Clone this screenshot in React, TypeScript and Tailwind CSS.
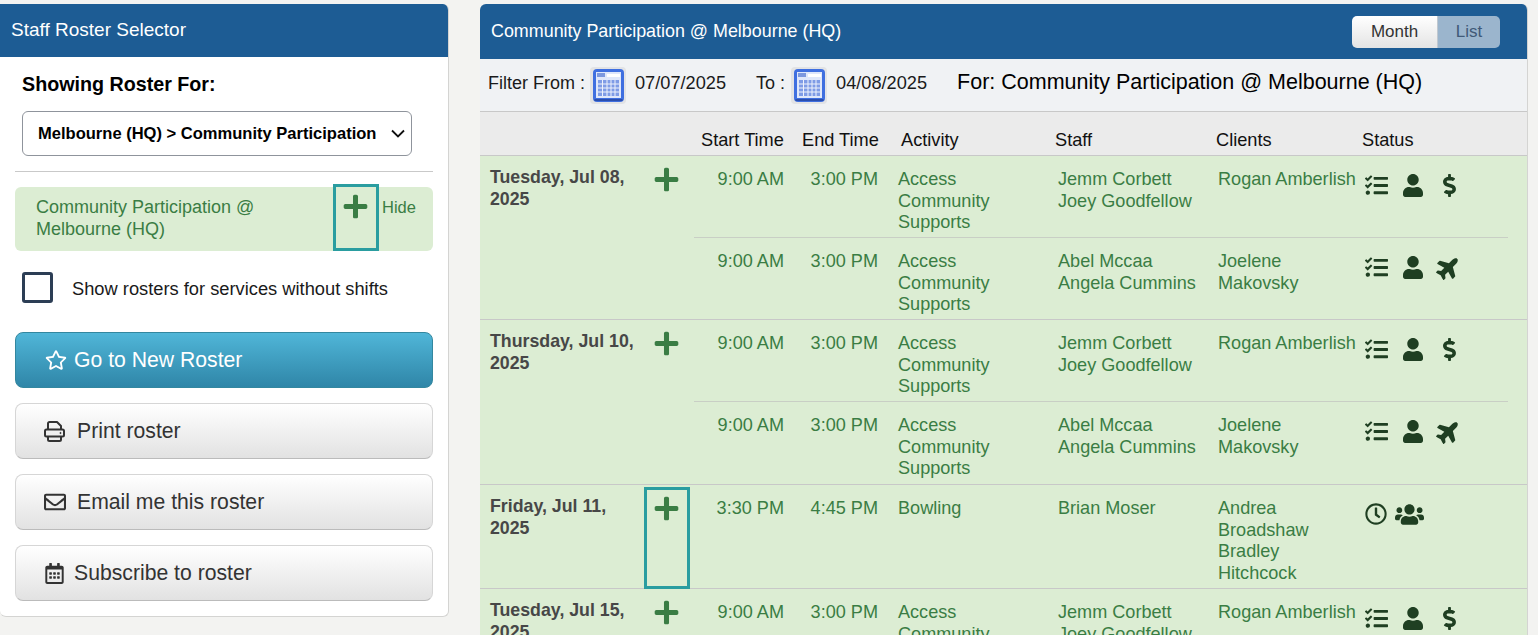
import { FaPlus, FaTasks, FaUser, FaDollarSign, FaPlane, FaUsers, FaRegClock, FaRegStar, FaRegEnvelope, FaRegCalendarAlt } from 'react-icons/fa';
import type { ReactNode } from 'react';

type Shift = {
	start: string;
	end: string;
	activity: string[];
	staff: string[];
	clients: string[];
	status: ReactNode;
};

type Day = {
	date: string[];
	height: string;
	highlight?: boolean;
	shifts: Shift[];
};

const statusPaid = (
	<>
		<FaTasks className="text-[23px]" />
		<FaUser className="ml-[15px] h-[23px] w-[20px]" preserveAspectRatio="none" />
		<FaDollarSign className="ml-[15px] text-[23px]" />
	</>
);

const statusLeave = (
	<>
		<FaTasks className="text-[23px]" />
		<FaUser className="ml-[15px] h-[23px] w-[20px]" preserveAspectRatio="none" />
		<FaPlane className="ml-[13px] -rotate-45 text-[25px]" />
	</>
);

const amberlish: Omit<Shift, 'status'> = {
	start: '9:00 AM',
	end: '3:00 PM',
	activity: ['Access', 'Community', 'Supports'],
	staff: ['Jemm Corbett', 'Joey Goodfellow'],
	clients: ['Rogan Amberlish'],
};

const makovsky: Omit<Shift, 'status'> = {
	start: '9:00 AM',
	end: '3:00 PM',
	activity: ['Access', 'Community', 'Supports'],
	staff: ['Abel Mccaa', 'Angela Cummins'],
	clients: ['Joelene', 'Makovsky'],
};

const days: Day[] = [
	{
		date: ['Tuesday, Jul 08,', '2025'],
		height: 'h-[164px]',
		shifts: [
			{ ...amberlish, status: statusPaid },
			{ ...makovsky, status: statusLeave },
		],
	},
	{
		date: ['Thursday, Jul 10,', '2025'],
		height: 'h-[165px]',
		shifts: [
			{ ...amberlish, status: statusPaid },
			{ ...makovsky, status: statusLeave },
		],
	},
	{
		date: ['Friday, Jul 11,', '2025'],
		height: 'h-[104px]',
		highlight: true,
		shifts: [
			{
				start: '3:30 PM',
				end: '4:45 PM',
				activity: ['Bowling'],
				staff: ['Brian Moser'],
				clients: ['Andrea', 'Broadshaw', 'Bradley', 'Hitchcock'],
				status: (
					<>
						<FaRegClock className="text-[22px]" />
						<FaUsers className="ml-[8px] text-[29px]" />
					</>
				),
			},
		],
	},
	{
		date: ['Tuesday, Jul 15,', '2025'],
		height: 'h-[120px]',
		shifts: [{ ...amberlish, status: statusPaid }],
	},
];

const Lines = ({ items }: { items: string[] }) => (
	<>
		{items.map((item) => (
			<div key={item}>{item}</div>
		))}
	</>
);

const CalendarButton = () => (
	<div className="flex h-[37px] w-[36px] items-center justify-center rounded-[4px] bg-[#e2e3e5]">
		<svg width="31" height="33" viewBox="0 0 31 33">
			<rect x="0" y="0" width="31" height="33" rx="4" fill="#3f6fe0" />
			<rect x="3" y="3" width="25" height="26" fill="#dfe7fa" />
			<rect x="4" y="4" width="8" height="4" fill="#7c98de" />
			<rect x="14" y="5" width="13" height="3" fill="#ffffff" />
			<rect x="5" y="11" width="21" height="16" fill="#7f9ce6" />
			<path d="M5 15h21M5 19h21M5 23h21M9.500 11v16M14 11v16M18 11v16M22 11v16" stroke="#eef2fc" strokeWidth="1" />
			<rect x="1.500" y="30" width="28" height="2" fill="#2b4fae" />
		</svg>
	</div>
);

const PrintIcon = () => (
	<svg width="21" height="21" viewBox="0 0 21 21" fill="none" stroke="#333333" strokeWidth="2" strokeLinejoin="round">
		<path d="M4 9V2.500A1.500 1.500 0 0 1 5.500 1H13l4 4v4" />
		<rect x="1" y="8.500" width="19" height="7" rx="1.500" />
		<path d="M4 15.500v3A1.500 1.500 0 0 0 5.500 20h10a1.500 1.500 0 0 0 1.500-1.500v-3" />
		<circle cx="16.500" cy="12" r="0.600" fill="#333333" strokeWidth="1" />
	</svg>
);

const GreyButton = ({ icon, label, gap }: { icon: ReactNode; label: string; gap: string }) => (
	<button className={`flex h-[56px] w-full items-center rounded-[8px] border border-[#d6d6d6] border-b-[#bbbbbb] bg-gradient-to-b from-white to-[#e2e2e2] pl-[28px] text-[21.200px] text-[#333333] ${gap}`}>
		{icon}
		{label}
	</button>
);

const RosterSelector = () => (
	<div className="w-[449px] shrink-0 overflow-hidden rounded-[6px] rounded-tl-none border-r border-b border-[#d4d4d2] bg-white pb-[15px]">
		<div className="flex h-[53px] items-center bg-[#1d5c94] pl-[11px] text-[19px] text-white">Staff Roster Selector</div>
		<div className="mx-[15px]">
			<div className="pt-[15px] pl-[7px] text-[19.700px] leading-[24px] font-bold text-black">Showing Roster For:</div>
			<div className="mt-[15px] ml-[7px] flex h-[45px] w-[390px] items-center justify-between rounded-[6px] border border-[#8f949c] pr-[6px] pl-[15px] text-[16.550px] font-bold text-black">
				<span className="pt-[2px]">Melbourne (HQ) &gt; Community Participation</span>
				<svg width="14" height="9" viewBox="0 0 14 9" fill="none">
					<path d="M1 1.500l6 6 6-6" stroke="#111111" strokeWidth="1.800" />
				</svg>
			</div>
			<div className="mt-[15px] border-t border-[#c9c9c9]" />
			<div className="relative mt-[15px] flex h-[64px] rounded-[6px] bg-[#dcedd3] text-[#3a7d44]">
				<div className="w-[318px] pt-[9px] pl-[21px] text-[18px] leading-[22px]">
					Community Participation @
					<br />
					Melbourne (HQ)
				</div>
				<FaPlus className="mt-[6px] ml-[9px] text-[27px] text-[#3a7d44]" />
				<div className="mt-[9px] ml-[13px] text-[16.500px] leading-[22px]">Hide</div>
				<div className="absolute -top-[3px] left-[318px] h-[67px] w-[46px] border-[3px] border-[#2a9da0]" />
			</div>
			<div className="mt-[21px] flex items-center pl-[7px]">
				<div className="h-[31px] w-[31px] rounded-[3px] border-[3px] border-[#2c3e55] bg-white" />
				<span className="ml-[19px] pt-[2px] text-[18.300px] text-[#1a1a1a]">Show rosters for services without shifts</span>
			</div>
			<button className="mt-[29px] flex h-[56px] w-full items-center rounded-[8px] border border-[#33879f] bg-gradient-to-b from-[#50b6d8] to-[#2f86a8] pl-[29px] text-[21.200px] text-white">
				<FaRegStar className="mr-[7px] text-[22px]" />
				Go to New Roster
			</button>
			<div className="mt-[15px] flex flex-col gap-[15px]">
				<GreyButton icon={<PrintIcon />} label="Print roster" gap="gap-[12px]" />
				<GreyButton icon={<FaRegEnvelope className="text-[22px]" />} label="Email me this roster" gap="gap-[11px]" />
				<GreyButton icon={<FaRegCalendarAlt className="text-[21px]" />} label="Subscribe to roster" gap="gap-[9px]" />
			</div>
		</div>
	</div>
);

const ShiftRow = ({ shift, last }: { shift: Shift; last: boolean }) => (
	<div className={`flex h-[82px] pt-[13px] ${last ? '' : 'border-b border-[#c9cfc5]'}`}>
		<div className="w-[90px] text-right">{shift.start}</div>
		<div className="w-[94px] text-right">{shift.end}</div>
		<div className="w-[180px] pl-[20px]"><Lines items={shift.activity} /></div>
		<div className="w-[160px]"><Lines items={shift.staff} /></div>
		<div className="w-[147px] -ml-[20px] translate-x-[20px]"><Lines items={shift.clients} /></div>
		<div className="mt-[5px] flex h-[22px] items-center pl-[20px] text-[#1f3f22]">{shift.status}</div>
	</div>
);

const DayRow = ({ day }: { day: Day }) => (
	<div className={`relative flex border-b border-[#c8c8c8] bg-[#dcedd3] text-[18.100px] leading-[21.600px] text-[#3a7d44] ${day.height}`}>
		<div className="w-[174px] pt-[11px] pl-[10px] text-[17.750px] font-bold text-[#474747]">
			<Lines items={day.date} />
		</div>
		<div className="-ml-[1px] w-[41px] pt-[10px]">
			<FaPlus className="text-[27px] text-[#3a7d44]" />
		</div>
		{day.highlight && <div className="absolute top-[2px] left-[164px] h-[102px] w-[46px] border-[3px] border-[#2a9da0]" />}
		<div className="mr-[19px] flex-1">
			{day.shifts.map((shift, index) => (
				<ShiftRow key={index} shift={shift} last={index === day.shifts.length - 1} />
			))}
		</div>
	</div>
);

const RosterList = () => (
	<div className="w-[1048px] shrink-0 overflow-hidden rounded-t-[6px] border-r border-[#d4d4d2]">
		<div className="flex h-[55px] items-center justify-between bg-[#1d5c94] pr-[27px] pl-[11px] text-[17.900px] text-white">
			<span>Community Participation @ Melbourne (HQ)</span>
			<div className="flex h-[32px] overflow-hidden rounded-[5px] text-[17px]">
				<div className="flex w-[85px] items-center justify-center bg-gradient-to-b from-white to-[#e4e4e4] text-[#333333]">Month</div>
				<div className="flex w-[63px] items-center justify-center border-l border-[#c0c8d0] bg-[#9bb5cd] text-[#405a78]">List</div>
			</div>
		</div>
		<div className="flex h-[53px] items-center border-b border-[#c8c8c8] bg-[#f0f2f4] pl-[8px] text-[18px] text-[#1a1a1a]">
			<span className="pb-[3px]">Filter From :</span>
			<div className="ml-[5px]"><CalendarButton /></div>
			<span className="ml-[9px] pb-[3px] text-[18.200px]">07/07/2025</span>
			<span className="ml-[30px] pb-[3px]">To :</span>
			<div className="ml-[6px]"><CalendarButton /></div>
			<span className="ml-[9px] pb-[3px] text-[18.200px]">04/08/2025</span>
			<span className="ml-[30px] pb-[6px] text-[21.500px] text-black">For: Community Participation @ Melbourne (HQ)</span>
		</div>
		<div className="flex h-[44px] items-end border-b border-[#c8c8c8] bg-[#ebebeb] pb-[4px] text-[18.200px] leading-[21px] text-[#111111]">
			<div className="w-[221px]" />
			<div className="w-[101px]">Start Time</div>
			<div className="w-[99px]">End Time</div>
			<div className="w-[154px]">Activity</div>
			<div className="w-[161px]">Staff</div>
			<div className="w-[146px]">Clients</div>
			<div>Status</div>
		</div>
		{days.map((day) => (
			<DayRow key={day.date[0]} day={day} />
		))}
	</div>
);

export default function App() {
	return (
		<div className="flex h-[635px] items-start gap-[31px] overflow-hidden bg-[#f3f3f1] pt-[4px] font-['Liberation_Sans',Arial,sans-serif]">
			<RosterSelector />
			<RosterList />
		</div>
	);
}
